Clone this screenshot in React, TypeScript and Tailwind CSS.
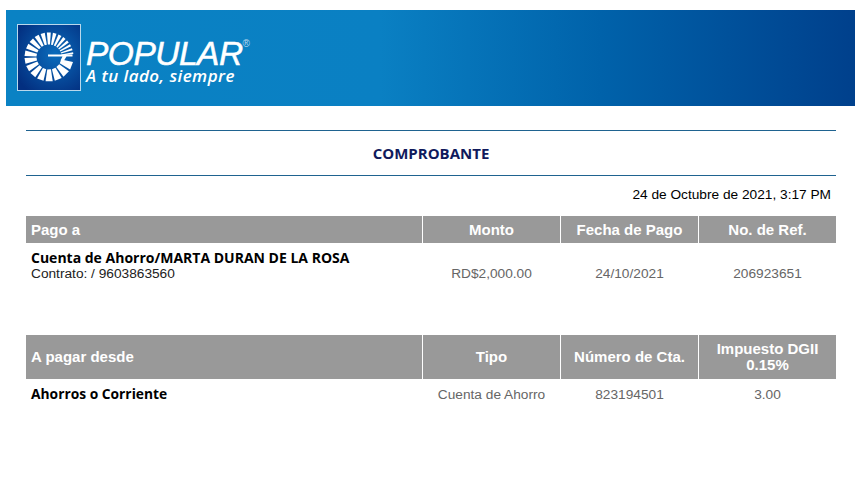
import React from "react";

/* sunburst wedges: they widen going counter-clockwise from the bar of the G */
const wedges: [number, number][] = [];
let angle = -7;
for (let i = 0; i < 21; i++) {
  const w = 4 + i * 0.75;
  wedges.push([angle - w, angle]);
  angle -= w + 5;
}

const wedgePath = (a: number, b: number, r0: number, r1: number) => {
  const p = (ang: number, r: number) => {
    const t = (ang * Math.PI) / 180;
    return `${(32 + r * Math.cos(t)).toFixed(2)} ${(33 + r * Math.sin(t)).toFixed(2)}`;
  };
  return `M${p(a, r0)}L${p(a, r1)}L${p(b, r1)}L${p(b, r0)}Z`;
};

const Logo = () => (
  <svg width="64" height="67" viewBox="0 0 64 67" className="shrink-0">
    <defs>
      <radialGradient id="sq" cx="0.6" cy="0.45" r="0.7">
        <stop offset="0" stopColor="#0a6cbc" />
        <stop offset="1" stopColor="#032f80" />
      </radialGradient>
    </defs>
    <rect x="0.5" y="0.5" width="63" height="66" fill="url(#sq)" stroke="#b9d8ec" strokeWidth="1" />
    <g className="blur-[0.3px]">
      {wedges.map(([a, b], i) => (
        <path key={i} d={wedgePath(a, b, 12.5, 24.5)} fill="#ffffff" />
      ))}
      <path d="M31 30.5h24.5v2h-6l-2.5 4h-3.5l2-4H31z" fill="#ffffff" />
    </g>
  </svg>
);

const Header = () => (
  <div className="h-[96px] w-[849px] flex items-center pl-[11px] pb-[2px] bg-[linear-gradient(90deg,#0a82c4_0%,#0a80c3_44%,#0062aa_70%,#00408c_100%)]">
    <Logo />
    <div className="ml-[5px] mt-[10px] flex flex-col text-white italic font-['Liberation_Sans',sans-serif]">
      <div className="flex items-start">
        <span className="text-[33.5px] leading-[28px] tracking-[-0.5px] [-webkit-text-stroke:0.5px_white]">POPULAR</span>
        <span className="text-[10px] leading-[10px] mt-[-1px] text-[#b9d8ec] not-italic">®</span>
      </div>
      <span className="font-['Open_Sans',sans-serif] font-semibold text-[17px] leading-[16px] tracking-[0.45px]">A tu lado, siempre</span>
    </div>
  </div>
);

const Th = ({ children, left }: { children: React.ReactNode; left?: boolean }) => (
  <div className={`bg-[#999999] text-white font-bold text-[15px] leading-[16px] flex items-center ${left ? "pl-[5px]" : "justify-center text-center"}`}>
    {children}
  </div>
);

const Td = ({ children }: { children: React.ReactNode }) => (
  <div className="text-center text-[13.7px] leading-[16px] text-[#666666]">{children}</div>
);

const cols = "grid grid-cols-[396px_137px_137px_137px] gap-x-px";

export default function App() {
  return (
    <div className="w-[860px] h-[487px] bg-white pt-[10px] pl-[6px] overflow-hidden font-['Liberation_Sans',Arial,sans-serif]">
      <Header />
      <div className="ml-[20px] mt-[24px] w-[810px]">
        <div className="h-[46px] border-y border-[#1f6390] flex items-center justify-center">
          <h1 className="font-['Open_Sans',sans-serif] font-bold text-[15px] text-[#101a5c]">COMPROBANTE</h1>
        </div>
        <div className="mt-[11px] pr-[5px] text-right text-[13.7px] leading-[16px] text-black">24 de Octubre de 2021, 3:17 PM</div>

        <div className={`${cols} h-[27px] mt-[13px]`}>
          <Th left>Pago a</Th>
          <Th>Monto</Th>
          <Th>Fecha de Pago</Th>
          <Th>No. de Ref.</Th>
        </div>
        <div className={`${cols} mt-[7px] h-[85px]`}>
          <div className="pl-[5px] text-black">
            <div className="font-['Open_Sans',sans-serif] font-bold text-[14px] leading-[16px]">Cuenta de Ahorro/MARTA DURAN DE LA ROSA</div>
            <div className="text-[13.7px] leading-[15px] text-[#222222]">Contrato: / 9603863560</div>
          </div>
          <div className="pt-[16px]"><Td>RD$2,000.00</Td></div>
          <div className="pt-[16px]"><Td>24/10/2021</Td></div>
          <div className="pt-[16px]"><Td>206923651</Td></div>
        </div>

        <div className={`${cols} h-[44px]`}>
          <Th left>A pagar desde</Th>
          <Th>Tipo</Th>
          <Th>Número de Cta.</Th>
          <Th>Impuesto DGII<br />0.15%</Th>
        </div>
        <div className={`${cols} mt-[7px]`}>
          <div className="pl-[5px] font-['Open_Sans',sans-serif] font-bold text-[13.8px] leading-[16px] text-black">Ahorros o Corriente</div>
          <div className="pt-px"><Td>Cuenta de Ahorro</Td></div>
          <div className="pt-px"><Td>823194501</Td></div>
          <div className="pt-px"><Td>3.00</Td></div>
        </div>
      </div>
    </div>
  );
}
